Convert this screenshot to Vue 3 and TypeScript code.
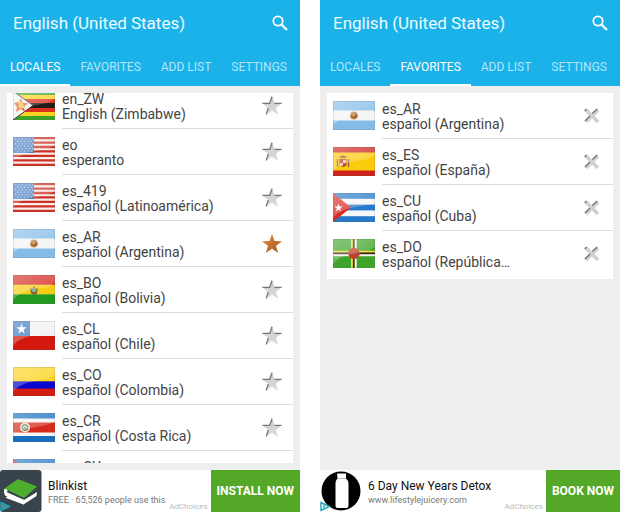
<script setup lang="ts">
import { reactive } from 'vue'

interface Locale {
  code: string
  name: string
  flag: string
  starred?: boolean
}

interface Ad {
  title: string
  detail: string
  action: string
  logo: 'book' | 'bottle'
}

interface Screen {
  id: string
  tab: string
  kind: 'locales' | 'favorites'
  rows: Locale[]
  ad: Ad
}

const tabs = ['LOCALES', 'FAVORITES', 'ADD LIST', 'SETTINGS']

const screens = reactive<Screen[]>([
  {
    id: 'all',
    tab: 'LOCALES',
    kind: 'locales',
    rows: [
      { code: 'en_ZW', name: 'English (Zimbabwe)', flag: 'zw' },
      { code: 'eo', name: 'esperanto', flag: 'us' },
      { code: 'es_419', name: 'español (Latinoamérica)', flag: 'us' },
      { code: 'es_AR', name: 'español (Argentina)', flag: 'ar', starred: true },
      { code: 'es_BO', name: 'español (Bolivia)', flag: 'bo' },
      { code: 'es_CL', name: 'español (Chile)', flag: 'cl' },
      { code: 'es_CO', name: 'español (Colombia)', flag: 'co' },
      { code: 'es_CR', name: 'español (Costa Rica)', flag: 'cr' },
      { code: 'es_CU', name: 'español (Cuba)', flag: 'cu' },
    ],
    ad: { title: 'Blinkist', detail: 'FREE · 65,526 people use this', action: 'INSTALL NOW', logo: 'book' },
  },
  {
    id: 'fav',
    tab: 'FAVORITES',
    kind: 'favorites',
    rows: [
      { code: 'es_AR', name: 'español (Argentina)', flag: 'ar' },
      { code: 'es_ES', name: 'español (España)', flag: 'es' },
      { code: 'es_CU', name: 'español (Cuba)', flag: 'cu' },
      { code: 'es_DO', name: 'español (República…', flag: 'dm' },
    ],
    ad: { title: '6 Day New Years Detox', detail: 'www.lifestylejuicery.com', action: 'BOOK NOW', logo: 'bottle' },
  },
])

const starPoints = '10,0 12.5,7 20,7.2 14,11.8 16.2,19 10,14.8 3.8,19 6,11.8 0,7.2 7.5,7'

function activate(screen: Screen, row: Locale) {
  if (screen.kind === 'locales') row.starred = !row.starred
  else screen.rows = screen.rows.filter((r) => r !== row)
}
</script>

<template>
  <svg class="sprites" aria-hidden="true">
    <defs>
      <linearGradient id="gloss" x1="0" y1="0" x2="1" y2="1">
        <stop offset="0" stop-color="#fff" stop-opacity=".38" />
        <stop offset="1" stop-color="#fff" stop-opacity=".12" />
      </linearGradient>
      <linearGradient id="silver" x1="0" y1="0" x2="0" y2="1">
        <stop offset="0" stop-color="#cacaca" />
        <stop offset="1" stop-color="#dcdcdc" />
      </linearGradient>
      <linearGradient id="bronze" x1="0" y1="0" x2="1" y2="1">
        <stop offset="0" stop-color="#d98a42" />
        <stop offset="1" stop-color="#a95a1c" />
      </linearGradient>
    </defs>
    <symbol id="flag-zw" viewBox="0 0 42 29">
      <rect width="42" height="29" fill="#3fa529" />
      <rect y="4" width="42" height="21" fill="#fbd321" />
      <rect y="8" width="42" height="13" fill="#dc3020" />
      <rect y="12" width="42" height="5" fill="#241a18" />
      <path d="M0 0L20 14.500L0 29Z" fill="#f4f4f2" />
      <path d="M0 0L20 14.500L0 29" fill="none" stroke="#333" stroke-width="1" />
      <path d="M8 7l2 5 5 0-4 4 1 5-4-3-5 3 1-5-3-4 5-1z" fill="#e66b42" />
      <path d="M5 10q4-1 5 3l2 4H6z" fill="#f3c453" />
    </symbol>
    <symbol id="flag-us" viewBox="0 0 42 29">
      <rect width="42" height="29" fill="#f5efed" />
      <path d="M0 1.200H42M0 5.600H42M0 10H42M0 14.400H42M0 18.800H42M0 23.300H42M0 27.800H42" stroke="#cf3023" stroke-width="2.300" />
      <rect width="21" height="16" fill="#4c7fc2" />
      <path d="M2 2H20M4 4.400H20M2 6.800H20M4 9.200H20M2 11.600H20M4 14H20" stroke="#b3cdec" stroke-width="1.200" stroke-dasharray="1.2 2.200" />
    </symbol>
    <symbol id="flag-ar" viewBox="0 0 42 29">
      <rect width="42" height="29" fill="#84bbe9" />
      <rect y="9.500" width="42" height="10" fill="#f4f5f6" />
      <circle cx="21" cy="14.500" r="4.300" fill="#e3b27c" />
      <circle cx="21" cy="14.500" r="3.200" fill="#9a6238" />
      <circle cx="20.600" cy="14" r="1.600" fill="#d29444" />
    </symbol>
    <symbol id="flag-bo" viewBox="0 0 42 29">
      <rect width="42" height="10" fill="#d42a20" />
      <rect y="9.700" width="42" height="10" fill="#f8cd18" />
      <rect y="19.300" width="42" height="9.700" fill="#229a1d" />
      <path d="M17 13l2 1 2-3 2 3 2-1-1 5q-3 3-6 0z" fill="#76733a" />
      <circle cx="21" cy="15.200" r="2" fill="#7fb8ae" />
      <path d="M18 18q3 2 6 0" fill="none" stroke="#b94525" />
    </symbol>
    <symbol id="flag-cl" viewBox="0 0 42 29">
      <rect width="42" height="15" fill="#f1f1f1" />
      <rect y="15" width="42" height="14" fill="#d3180d" />
      <rect width="17" height="15" fill="#3f7bc5" />
      <path d="M8.500 2.500l1.200 3.800h4l-3.200 2.400 1.200 3.800-3.200-2.300-3.200 2.300 1.200-3.800-3.200-2.400h4z" fill="#fff" />
    </symbol>
    <symbol id="flag-co" viewBox="0 0 42 29">
      <rect width="42" height="15" fill="#fbd31b" />
      <rect y="14.300" width="42" height="8" fill="#0907cd" />
      <rect y="21.600" width="42" height="7.400" fill="#d21c12" />
    </symbol>
    <symbol id="flag-cr" viewBox="0 0 42 29">
      <rect width="42" height="29" fill="#176fc2" />
      <rect y="5.500" width="42" height="17.500" fill="#f7f5f4" />
      <rect y="9.500" width="42" height="10" fill="#d62b1b" />
      <circle cx="12" cy="14.500" r="5" fill="#eeeadb" />
      <circle cx="12" cy="14.500" r="3.200" fill="#8da68c" stroke="#806f53" stroke-width=".8" />
      <path d="M10 15l2-2 2 2" fill="none" stroke="#e8eadb" />
    </symbol>
    <symbol id="flag-es" viewBox="0 0 42 29">
      <rect width="42" height="29" fill="#ce221b" />
      <rect y="5.500" width="42" height="18" fill="#fbcb0c" />
      <path d="M4.500 12v8M15.500 12v8" stroke="#9b6652" stroke-width="1.500" />
      <path d="M6.500 12h7v6q-3.500 4-7 0z" fill="#b7432d" />
      <path d="M10 13h3v3h-3zM7 16h3v3H7z" fill="#e6c599" />
      <path d="M7 11l-1-2 2 .5 2-1.500 2 1.500 2-.5-1 2z" fill="#a45935" />
    </symbol>
    <symbol id="flag-cu" viewBox="0 0 42 29">
      <rect width="42" height="29" fill="#2679ca" />
      <rect y="5.800" width="42" height="5.800" fill="#f4f6f8" />
      <rect y="17.400" width="42" height="5.800" fill="#f4f6f8" />
      <path d="M0 0L18 14.500L0 29Z" fill="#dc2a22" />
      <path d="M5.500 10.500l1 3h3.200L7.100 15.500l1 3-2.600-1.900-2.600 1.900 1-3-2.600-2h3.200z" fill="#fff" />
    </symbol>
    <symbol id="flag-dm" viewBox="0 0 42 29">
      <rect width="42" height="29" fill="#3fa52a" />
      <path d="M19 0V29M0 12.700H42" stroke="#f3df3a" stroke-width="2" />
      <path d="M20.800 0V29M0 14.500H42" stroke="#38221b" stroke-width="1.800" />
      <path d="M22.700 0V29M0 16.300H42" stroke="#f6f4ed" stroke-width="2" />
      <circle cx="21" cy="14.500" r="5.700" fill="#cf3a2a" />
      <circle cx="21" cy="14.500" r="4" fill="none" stroke="#8d5437" stroke-width="1" stroke-dasharray="1.500 1" />
      <circle cx="21" cy="14.500" r="1.500" fill="#7b6651" />
    </symbol>
  </svg>

  <main class="page">
    <section v-for="screen in screens" :key="screen.id" class="phone">
      <header class="bar">
        <div class="title-row">
          <h1>English (United States)</h1>
          <button class="search" type="button" aria-label="Search">
            <svg viewBox="0 0 16 16" width="16" height="16">
              <circle cx="6" cy="6" r="4.700" fill="none" stroke="#fff" stroke-width="1.800" />
              <path d="M9.600 9.600L15 15" stroke="#fff" stroke-width="2.200" />
            </svg>
          </button>
        </div>
        <nav class="tabs">
          <button
            v-for="tab in tabs"
            :key="tab"
            type="button"
            class="tab"
            :class="{ active: tab === screen.tab }"
            @click="screen.tab = tab"
          >{{ tab }}</button>
        </nav>
      </header>

      <div class="content">
        <ul class="list" :class="screen.kind">
          <li v-for="row in screen.rows" :key="row.code" class="row">
            <svg class="flag" viewBox="0 0 42 29" aria-hidden="true">
              <use :href="`#flag-${row.flag}`" width="42" height="29" />
              <path d="M0 0H42V7Q39 12 26 13.500Q6 16 0 25Z" fill="url(#gloss)" />
              <rect x=".5" y=".5" width="41" height="28" fill="none" stroke="#555" stroke-opacity=".15" />
            </svg>
            <div class="entry">
              <div class="text">
                <div>{{ row.code }}</div>
                <div>{{ row.name }}</div>
              </div>
              <button
                class="toggle"
                type="button"
                :aria-label="screen.kind === 'locales' ? `Favorite ${row.code}` : `Remove ${row.code}`"
                @click="activate(screen, row)"
              >
                <svg v-if="screen.kind === 'locales'" viewBox="0 0 20 19" width="20" height="19">
                  <polygon v-if="row.starred" :points="starPoints" fill="url(#bronze)" />
                  <template v-else>
                    <polygon :points="starPoints" fill="url(#silver)" />
                    <path d="M0.500 7.400H7.700L10 0.800M12.500 7.400H19.500M6.300 12L4.200 18.400" fill="none" stroke="#777" stroke-width="1.300" />
                  </template>
                </svg>
                <svg v-else viewBox="0 0 16 16" width="16" height="16">
                  <path d="M2 2L14 14M14 2L2 14" stroke="#d0d0d0" stroke-width="3.600" />
                  <path d="M0.700 3L2.600 1M8.300 5.400L13.200 0.900M0.900 13L6 8" fill="none" stroke="#737373" stroke-width="1.400" />
                </svg>
              </button>
            </div>
          </li>
        </ul>
      </div>

      <footer class="ad">
        <div class="logo">
          <svg v-if="screen.ad.logo === 'book'" viewBox="0 0 42 42" width="42" height="42">
            <rect width="41.500" height="42" rx="3" fill="#38434c" />
            <path d="M6 27L12 25L24 30L37 22L36.500 26L23.500 34.500L6 28Z" fill="#fff" />
            <path d="M4.500 18.500L8 20L6.500 22L24 30V34.500L5 25.500Q3 22 4.500 18.500Z" fill="#fff" />
            <path d="M4.500 18.500L18 9L37 16.500L24 28Z" fill="#4dae2d" />
          </svg>
          <svg v-else viewBox="0 0 42 42" width="42" height="42">
            <circle cx="21" cy="21" r="19.500" fill="#000" />
            <path d="M17 3.500h9v5q2.500 2 2.500 5V36q0 2-2 2h-9q-2 0-2-2V13.500q0-3 2-5z" fill="#fff" />
            <path d="M17 8.500h9" stroke="#aaa" stroke-width=".8" />
          </svg>
          <svg class="choices-mark" viewBox="0 0 11 11" width="11" height="11">
            <path d="M1 1.500L9.500 5.500L1 9.500Z" fill="#d6f2f5" fill-opacity=".35" stroke="#19a9bd" stroke-width="1.400" />
            <path d="M4 4v3" stroke="#19a9bd" stroke-width="1.300" />
          </svg>
        </div>
        <div class="ad-text">
          <strong>{{ screen.ad.title }}</strong>
          <span>{{ screen.ad.detail }}</span>
        </div>
        <a class="choices" href="#">AdChoices</a>
        <button class="cta" type="button">{{ screen.ad.action }}</button>
      </footer>
    </section>
  </main>
</template>

<style>
body {
  background: #fff;
}
</style>

<style scoped>
.sprites {
  position: absolute;
  width: 0;
  height: 0;
}
.page {
  display: grid;
  grid-template-columns: 1fr 1fr;
  gap: 20px;
  height: 100vh;
  font-family: Roboto, "Liberation Sans", sans-serif;
}
button {
  font: inherit;
  border: 0;
  padding: 0;
  background: none;
  cursor: pointer;
}
.phone {
  display: flex;
  flex-direction: column;
  min-width: 0;
  min-height: 0;
  background: #eee;
}
.bar {
  background: #1bb2ea;
  color: #fff;
}
.title-row {
  display: flex;
  align-items: center;
  justify-content: space-between;
  height: 46px;
  padding: 0 12px 0 13px;
}
h1 {
  margin: 0;
  font-size: 17px;
  font-weight: 400;
  color: #ecfbff;
}
.search {
  display: flex;
}
.tabs {
  display: flex;
  height: 40px;
}
.tab {
  padding: 4px 10px 0;
  font-size: 12px;
  color: #b4e5f8;
  border-bottom: 2px solid transparent;
  white-space: nowrap;
}
.tab.active {
  color: #fff;
  border-bottom-color: #fff;
}
.content {
  flex: 1;
  min-height: 0;
  margin: 7px;
  overflow: hidden;
}
.list {
  margin: 0;
  padding: 0 0 2px;
  list-style: none;
  background: #fff;
}
.list.locales {
  margin-top: -10px;
}
.row {
  display: flex;
  gap: 7px;
  height: 46px;
  padding-left: 6px;
}
.flag {
  flex: none;
  width: 42px;
  height: 29px;
  margin-top: 8px;
}
.entry {
  display: flex;
  flex: 1;
  min-width: 0;
  border-bottom: 1px solid #ddd;
}
.row:last-child .entry {
  border-bottom-color: transparent;
}
.text {
  flex: 1;
  padding-top: 9px;
  font-size: 14px;
  line-height: 15px;
  color: #444;
  white-space: nowrap;
}
.toggle {
  display: flex;
  align-items: center;
  justify-content: center;
  width: 42px;
}
.ad {
  display: flex;
  height: 42px;
  background: #fff;
}
.logo {
  position: relative;
  flex: none;
  width: 42px;
}
.choices-mark {
  position: absolute;
  left: 0;
  bottom: 0;
}
.ad-text {
  display: flex;
  flex: 1;
  flex-direction: column;
  padding: 8px 0 0 6px;
  white-space: nowrap;
}
.ad-text strong {
  font-size: 12px;
  line-height: 16px;
  font-weight: 400;
  color: #111;
}
.ad-text span {
  font-size: 9px;
  line-height: 12px;
  color: #777;
}
.choices {
  align-self: flex-end;
  margin-right: 3px;
  font-size: 8px;
  line-height: 11px;
  color: #bbb;
  text-decoration: none;
}
.cta {
  flex: none;
  padding: 0 6px;
  font-size: 12px;
  font-weight: 700;
  color: #fff;
  background: #53a927;
}
</style>
